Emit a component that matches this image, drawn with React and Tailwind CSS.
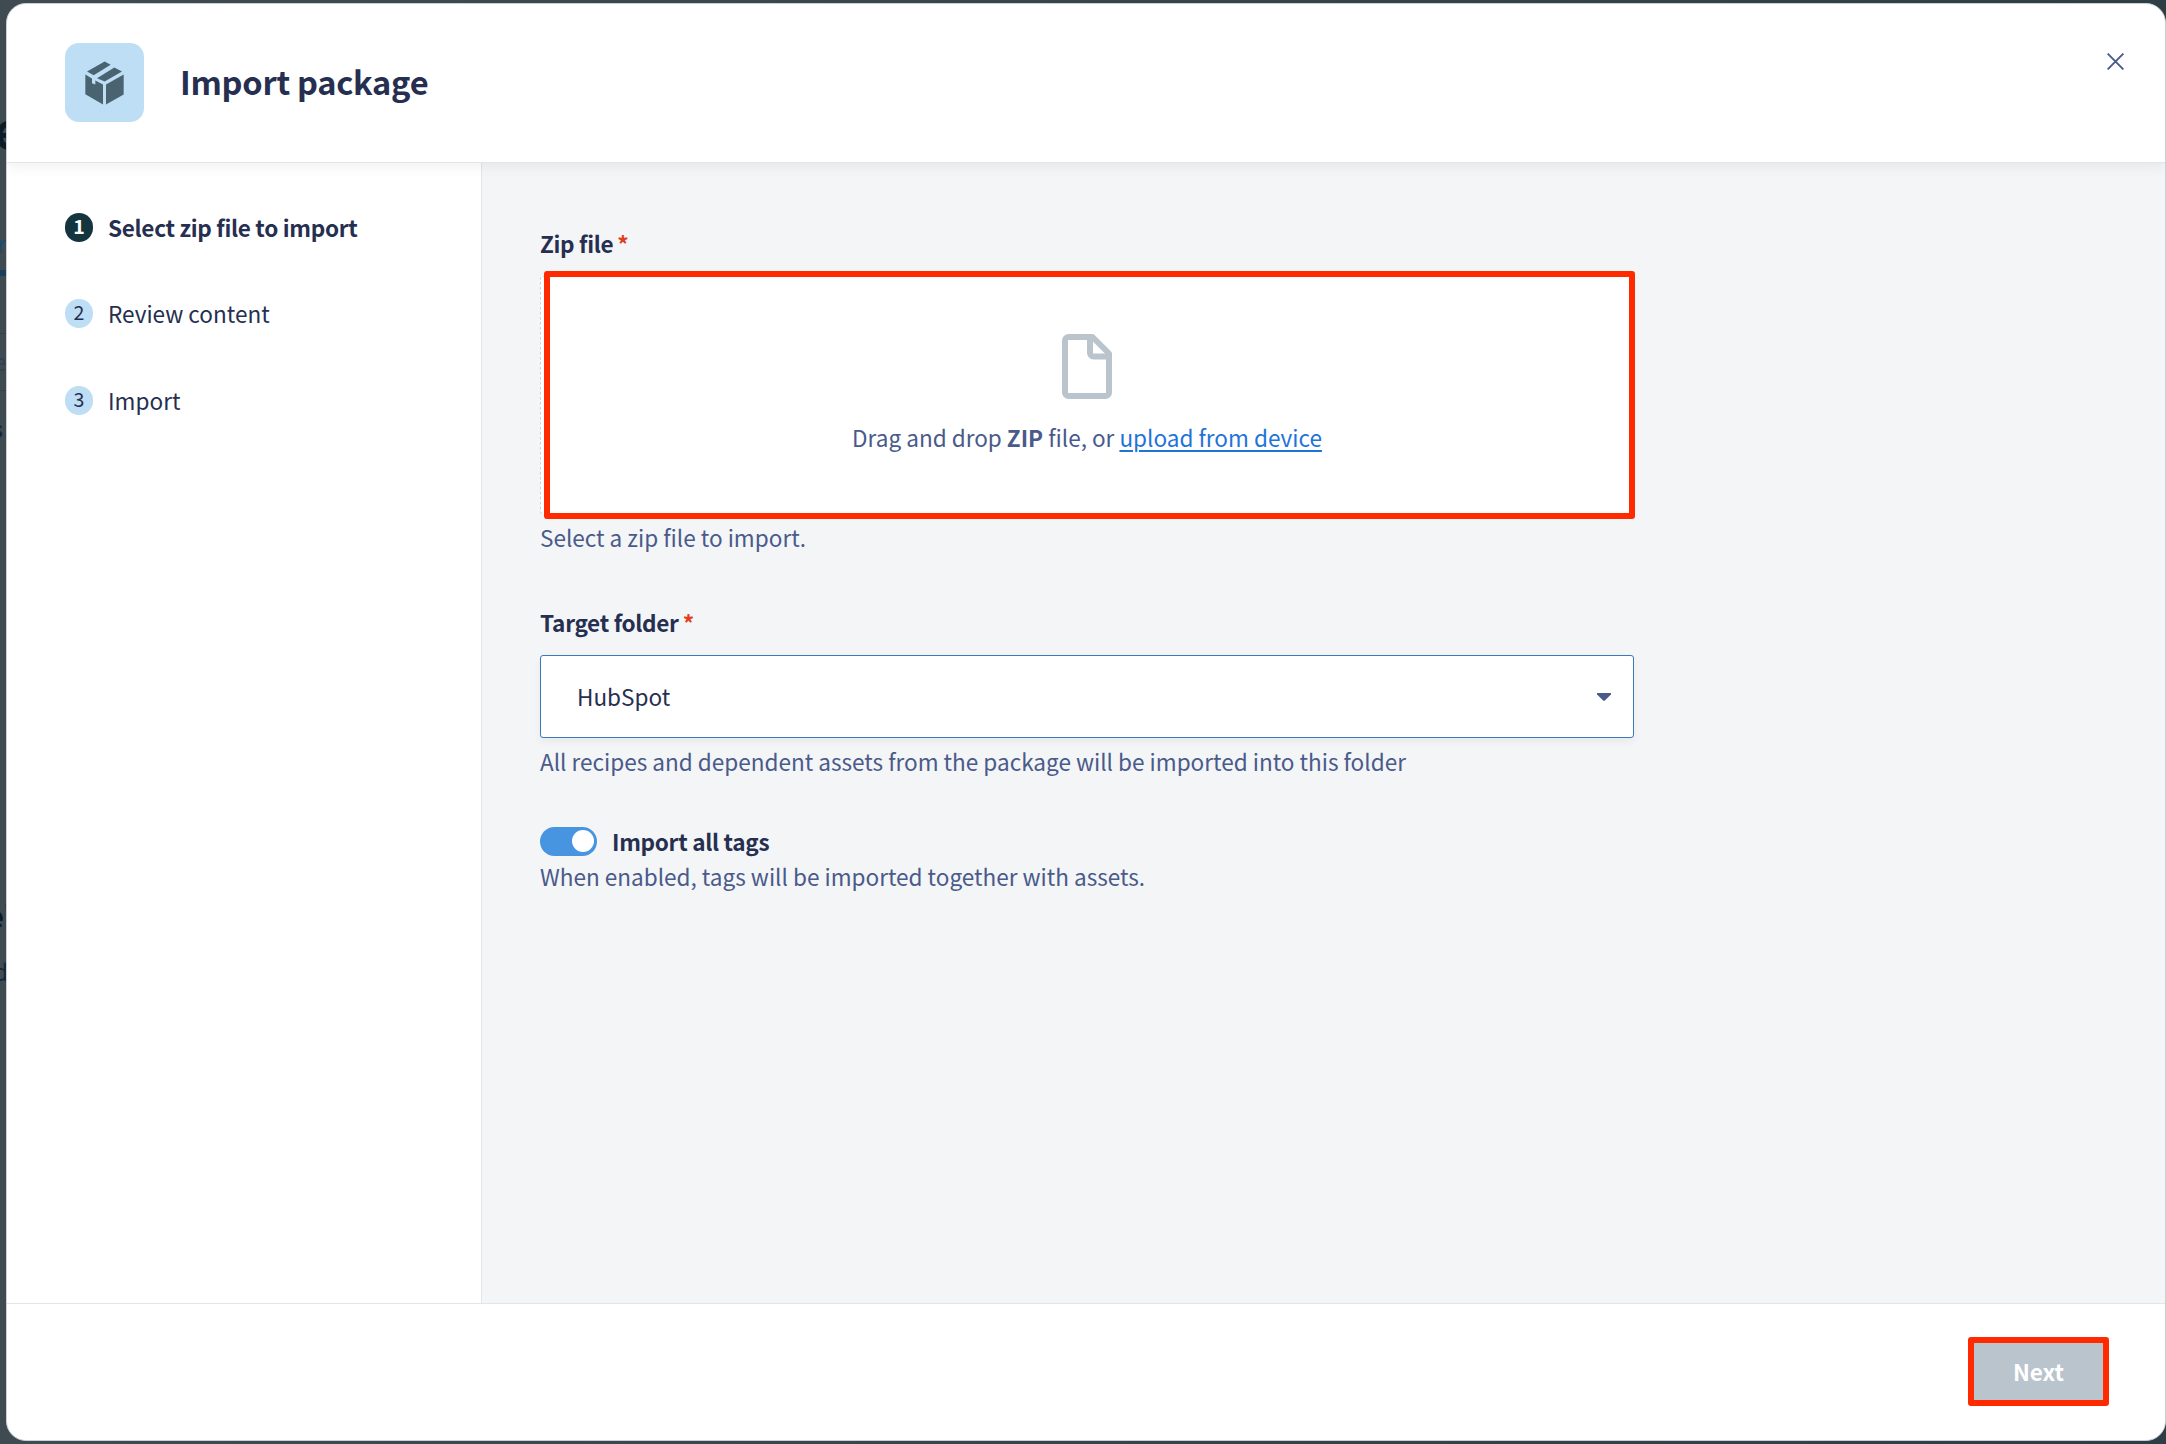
import React, { useState } from 'react';

const STEPS = ['Select zip file to import', 'Review content', 'Import'];

const PackageIcon = () => (
  <svg width="39" height="44" viewBox="0 0 117 131" fill="#496470">
    <path d="M6 31 59 1l18 10-51 31z" />
    <path d="M36 51 88 19l23 12-52 30z" />
    <path d="M1 40l20 12v14l10 4V58l23 12v60L1 99z" />
    <path d="M63 70l53-30v60l-53 30z" />
  </svg>
);

const CloseIcon = () => (
  <svg width="17" height="17" viewBox="0 0 17 17" stroke="#4a5a8a" strokeWidth="1.9">
    <path d="M.6.6l15.8 15.8M16.4.6.6 16.4" />
  </svg>
);

const FileIcon = () => (
  <svg width="50" height="65" viewBox="0 0 50 65" fill="none" stroke="#b9c4cd" strokeWidth="6" strokeLinejoin="round">
    <path d="M6.5 3H30.5L47 19.5V58.5a3.5 3.5 0 0 1-3.5 3.5h-37A3.5 3.5 0 0 1 3 58.5v-52A3.5 3.5 0 0 1 6.5 3Z" />
    <path d="M28 3v16a3.5 3.5 0 0 0 3.5 3.5H47" />
  </svg>
);

// Page behind the dialog, only a thin strip of it stays visible
const Backdrop = () => (
  <div className="absolute inset-y-0 left-0 w-[6px] overflow-hidden whitespace-nowrap text-[#14283a]">
    <span className="absolute left-[-6px] top-[98px] text-[48px] leading-[60px] font-bold text-[#0b1c27]">e</span>
    <span className="absolute right-0 top-[225px] text-[23px] leading-[36px] text-[#1b4a74]">r</span>
    <div className="absolute top-[270px] h-[6px] w-full bg-[#173f60]" />
    <div className="absolute top-[333px] h-px w-full bg-[#33424a]" />
    <span className="absolute right-0 top-[343px] text-[23px] leading-[36px] text-[#2b4254]">e</span>
    <div className="absolute top-[390px] h-px w-full bg-[#33424a]" />
    <span className="absolute right-[3px] top-[410px] text-[23px] leading-[36px] font-bold">s</span>
    <span className="absolute left-[-14px] top-[897px] text-[31px] leading-[36px] font-bold tracking-[-1px] text-[#0b1c27]">e'</span>
    <span className="absolute right-[-2px] top-[953px] text-[23px] leading-[36px]">d</span>
  </div>
);

const Label = ({ children }) => (
  <label className="flex text-[22.55px] leading-[36px] font-bold tracking-[-0.3px] text-[#262f50]">
    {children}
    <span className="ml-[4px] text-[#e03e1f]">*</span>
  </label>
);

const Hint = ({ className = '', children }) => (
  <p className={`text-[22.55px] leading-[36px] text-[#4a5a8a] ${className}`}>{children}</p>
);

const App = () => {
  const [step] = useState(0);
  const [importTags, setImportTags] = useState(true);

  return (
    <div className="relative h-[1444px] w-[2166px] overflow-hidden bg-linear-to-r from-[#3f4b50] to-[#2f3e45] pt-[3px] pl-[6px] font-['Noto_Sans_CJK_SC','Noto_Sans',sans-serif] text-[#262f50]">
      <Backdrop />
      <div className="flex h-[1438px] w-[2160px] flex-col overflow-hidden rounded-[20px] border border-[#c8d1d8] bg-white">
        <header className="relative z-10 flex h-[159px] shrink-0 items-start border-b border-[#e2e6e9] pt-[39px] pr-[41px] pl-[58px] shadow-[0_4px_12px_rgba(0,0,0,0.06)]">
          <div className="flex size-[79px] items-center justify-center rounded-[14px] bg-[#bedef5]">
            <PackageIcon />
          </div>
          <h1 className="mt-[13px] ml-[36px] text-[32.6px] leading-[50px] font-bold tracking-[-0.27px]">Import package</h1>
          <button className="mt-[10px] ml-auto">
            <CloseIcon />
          </button>
        </header>

        <div className="flex min-h-0 flex-1">
          <nav className="w-[475px] shrink-0 border-r border-[#e2e6e9] pt-[46px] pl-[58px]">
            {STEPS.map((label, i) => (
              <div key={label} className="flex h-[86.25px] items-start">
                <span
                  className={`mt-[4px] flex h-[29px] w-[28px] items-center justify-center rounded-full pb-[3px] text-[19.6px] leading-[26px] ${
                    i === step ? 'bg-[#14353f] font-bold text-white' : 'bg-[#bedef5]'
                  }`}
                >
                  {i + 1}
                </span>
                <span
                  className={`ml-[15px] text-[22.55px] leading-[36px] ${i === step ? 'font-bold tracking-[-0.3px]' : ''}`}
                >
                  {label}
                </span>
              </div>
            ))}
          </nav>

          <main className="flex-1 bg-[#f3f5f7] pt-[62px] pl-[58px]">
            <div className="w-[1094px]">
              <Label>Zip file</Label>
              <div className="relative mt-[15px] flex h-[238px] flex-col items-center rounded-[3px] border border-dashed border-[#ccd3da] bg-white pt-[57px]">
                <FileIcon />
                <p className="mt-[20px] text-[22.55px] leading-[36px] text-[#4a5a8a]">
                  Drag and drop <b>ZIP</b> file, or{' '}
                  <a className="text-[#1f74d8] underline decoration-2 underline-offset-[3px]">upload from device</a>
                </p>
                <div className="absolute -top-[6px] left-[3px] h-[248px] w-[1091px] rounded-[3px] border-6 border-[#ff2a00]" />
              </div>
              <Hint className="mt-[5px]">Select a zip file to import.</Hint>

              <div className="mt-[49px]">
                <Label>Target folder</Label>
              </div>
              <div className="mt-[15px] flex h-[83px] items-center justify-between rounded-[3px] border border-[#3a78c2] bg-white pr-[22px] pl-[36px] shadow-[0_4px_8px_rgba(0,0,0,0.05)]">
                <span className="pb-[2px] text-[22.55px] leading-[36px]">HubSpot</span>
                <svg width="14" height="8" viewBox="0 0 14 8" fill="#4a5a8a">
                  <path d="M0 0h14v1.5L7.6 7.7h-1.2L0 1.5z" />
                </svg>
              </div>
              <Hint className="mt-[5px]">
                All recipes and dependent assets from the package will be imported into this folder
              </Hint>

              <div className="mt-[44px] flex items-center">
                <button
                  onClick={() => setImportTags(!importTags)}
                  className={`flex h-[29px] w-[57px] items-center rounded-full px-[3px] ${
                    importTags ? 'justify-end bg-[#4795e0]' : 'justify-start bg-[#b9c4cd]'
                  }`}
                >
                  <span className="size-[22px] rounded-full bg-white" />
                </button>
                <span className="ml-[15px] text-[22.55px] leading-[36px] font-bold tracking-[-0.3px]">
                  Import all tags
                </span>
              </div>
              <Hint className="-mt-px">When enabled, tags will be imported together with assets.</Hint>
            </div>
          </main>
        </div>

        <footer className="flex h-[137px] shrink-0 items-start justify-end border-t border-[#e2e6e9] pt-[33px] pr-[56px]">
          <button className="h-[69px] w-[141px] rounded-[3px] border-6 border-[#ff2a00] bg-[#b9c4cd] pb-[2px] text-[22.55px] leading-[36px] font-bold text-white">
            Next
          </button>
        </footer>
      </div>
    </div>
  );
};

export default App;
